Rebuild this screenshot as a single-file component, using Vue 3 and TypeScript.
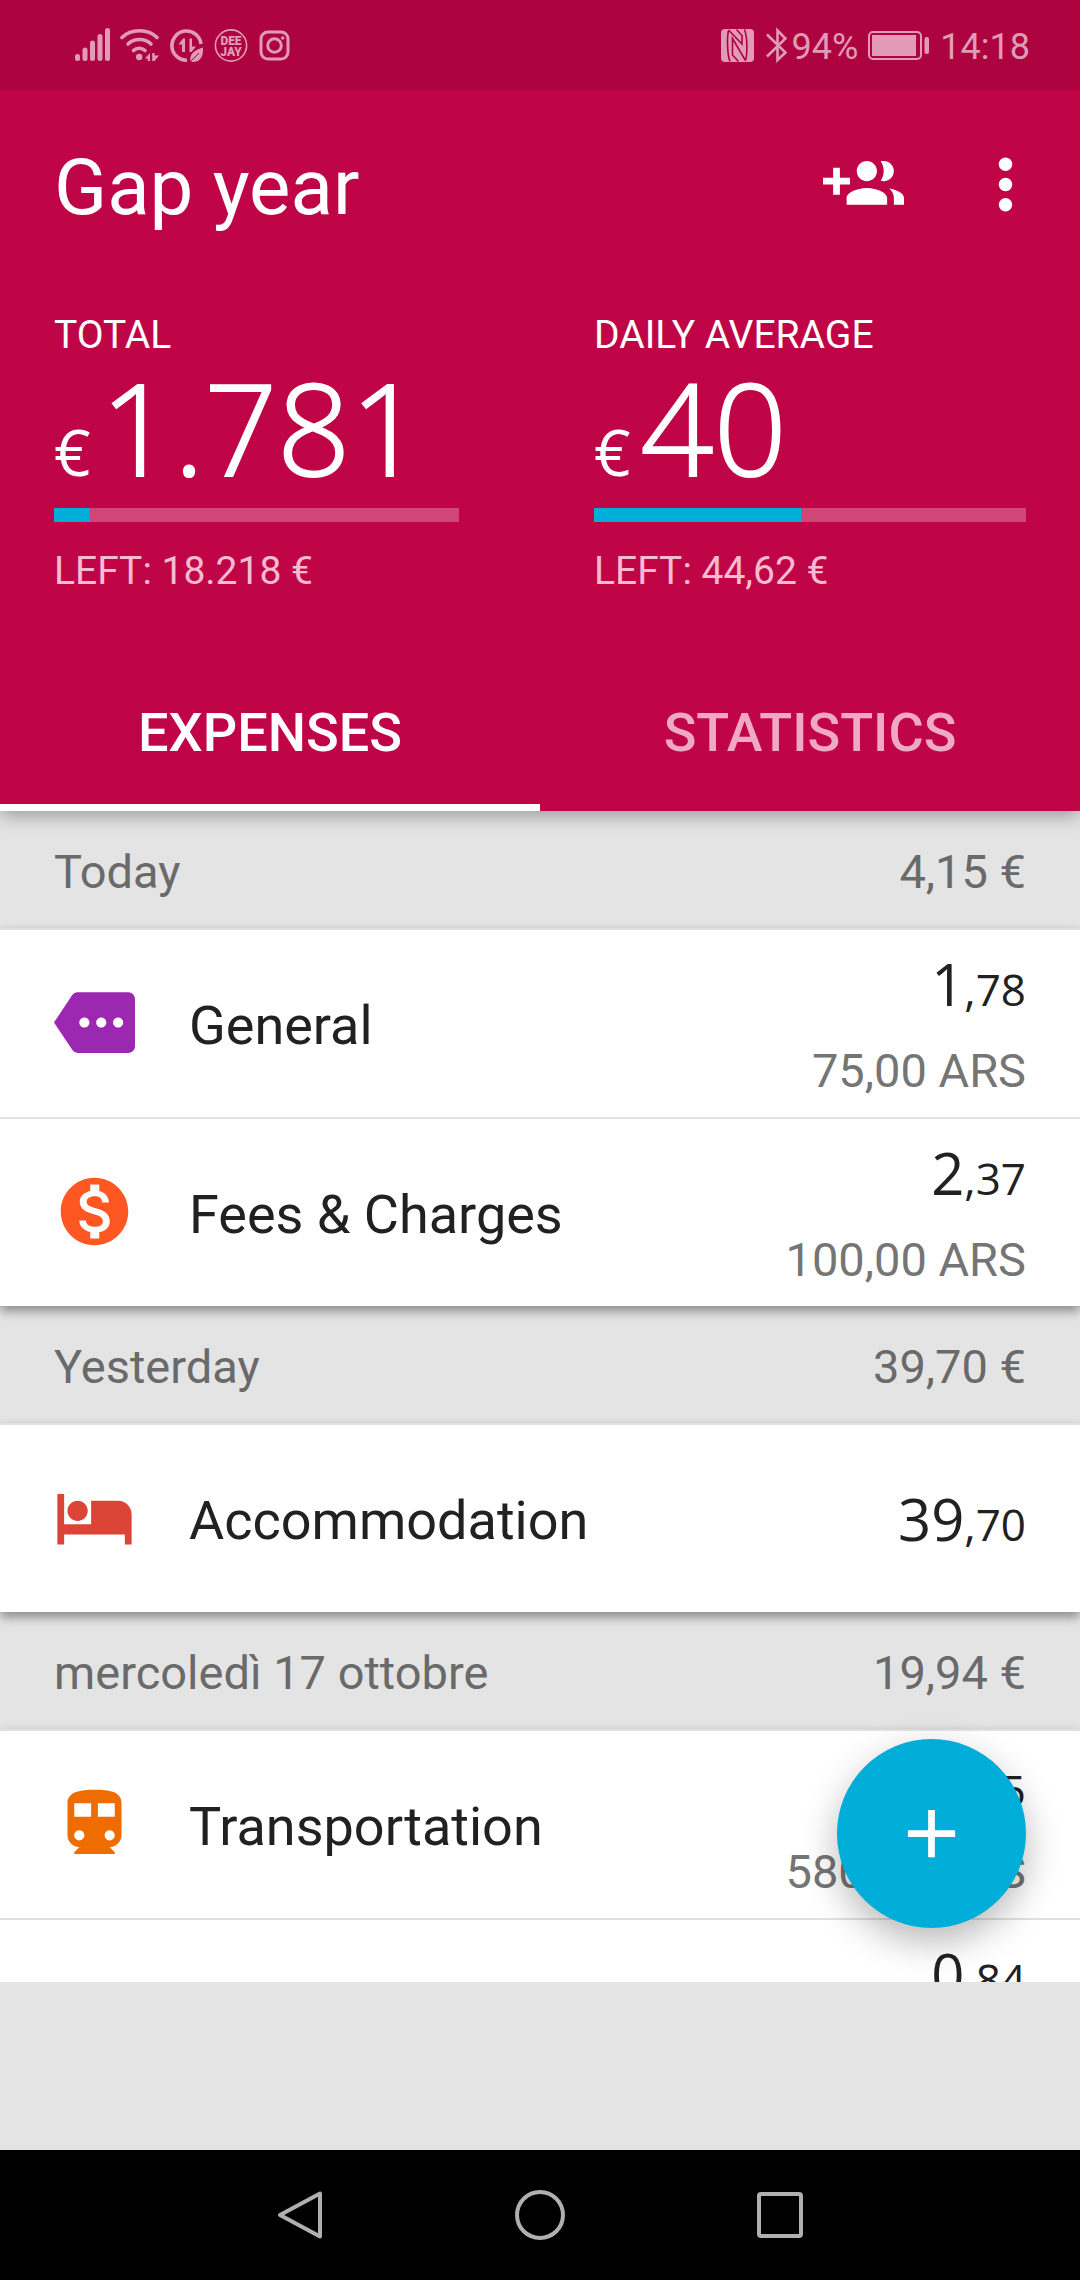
<script setup lang="ts">
import { ref } from 'vue'

interface Stat {
  label: string
  value: string
  left: string
  percent: number
}

interface Expense {
  icon?: string
  color?: string
  name?: string
  whole: string
  cents: string
  original?: string
}

interface Day {
  label: string
  total: string
  expenses: Expense[]
}

const icons: Record<string, string> = {
  tag: 'M22 3H7c-.69 0-1.23.35-1.59.88L0 12l5.41 8.11c.36.53.97.89 1.66.89H22c1.1 0 2-.9 2-2V5c0-1.1-.9-2-2-2zM9 13.5c-.83 0-1.5-.67-1.5-1.5s.67-1.5 1.5-1.5 1.5.67 1.5 1.5-.67 1.5-1.5 1.5zm5 0c-.83 0-1.5-.67-1.5-1.5s.67-1.5 1.5-1.5 1.5.67 1.5 1.5-.67 1.5-1.5 1.5zm5 0c-.83 0-1.5-.67-1.5-1.5s.67-1.5 1.5-1.5 1.5.67 1.5 1.5-.67 1.5-1.5 1.5z',
  coin: 'M12 2C6.48 2 2 6.48 2 12s4.48 10 10 10 10-4.48 10-10S17.52 2 12 2zm1.41 16.09V20h-2.67v-1.93c-1.71-.36-3.16-1.46-3.27-3.4h1.96c.1 1.05.82 1.87 2.65 1.87 1.96 0 2.4-.98 2.4-1.59 0-.83-.44-1.61-2.67-2.14-2.48-.6-4.18-1.62-4.18-3.67 0-1.72 1.39-2.84 3.11-3.21V4h2.67v1.95c1.86.45 2.79 1.86 2.85 3.39H14.3c-.05-1.11-.64-1.87-2.22-1.87-1.5 0-2.4.68-2.4 1.64 0 .84.65 1.39 2.67 1.91s4.18 1.39 4.18 3.91c-.01 1.83-1.38 2.83-3.12 3.16z',
  bed: 'M7 13c1.66 0 3-1.34 3-3S8.66 7 7 7s-3 1.34-3 3 1.34 3 3 3zm12-6h-8v7H3V5H1v15h2v-3h18v3h2v-9c0-2.21-1.79-4-4-4z',
  train: 'M12 2c-4 0-8 .5-8 4v9.5C4 17.43 5.57 19 7.5 19L6 20.5v.5h12v-.5L16.5 19c1.93 0 3.5-1.57 3.5-3.5V6c0-3.5-3.58-4-8-4zM7.5 17c-.83 0-1.5-.67-1.5-1.5S6.67 14 7.5 14s1.5.67 1.5 1.5S8.33 17 7.5 17zm3.5-7H6V6h5v4zm2 0V6h5v4h-5zm3.5 7c-.83 0-1.5-.67-1.5-1.5s.67-1.5 1.5-1.5 1.5.67 1.5 1.5-.67 1.5-1.5 1.5z',
}

const stats: Stat[] = [
  { label: 'TOTAL', value: '1.781', left: 'LEFT: 18.218 €', percent: 9 },
  { label: 'DAILY AVERAGE', value: '40', left: 'LEFT: 44,62 €', percent: 48 },
]

const tabs = ['EXPENSES', 'STATISTICS']
const activeTab = ref(0)

const days: Day[] = [
  {
    label: 'Today',
    total: '4,15 €',
    expenses: [
      { icon: 'tag', color: '#9c27b0', name: 'General', whole: '1', cents: ',78', original: '75,00 ARS' },
      { icon: 'coin', color: '#ff5722', name: 'Fees & Charges', whole: '2', cents: ',37', original: '100,00 ARS' },
    ],
  },
  {
    label: 'Yesterday',
    total: '39,70 €',
    expenses: [{ icon: 'bed', color: '#db4437', name: 'Accommodation', whole: '39', cents: ',70' }],
  },
  {
    label: 'mercoledì 17 ottobre',
    total: '19,94 €',
    expenses: [
      { icon: 'train', color: '#ef6c00', name: 'Transportation', whole: '13', cents: ',75', original: '580,00 ARS' },
      { whole: '0', cents: ',84', original: '' },
    ],
  },
]
</script>

<template>
  <div class="screen">
    <header class="top">
      <div class="status">
        <div class="status-group notices">
          <svg width="35" height="36" viewBox="0 0 35 36" fill="currentColor" aria-hidden="true">
            <rect x="0" y="27" width="5" height="7" rx="2.5" />
            <rect x="7.5" y="20.500" width="5" height="13.500" rx="2.5" />
            <rect x="15" y="13.500" width="5" height="20.500" rx="2.5" />
            <rect x="22.500" y="7" width="5" height="27" rx="2.5" />
            <rect x="30" y="1" width="5" height="33" rx="2.5" />
          </svg>
          <svg width="40" height="36" viewBox="0 0 40 36" aria-hidden="true">
            <g fill="none" stroke="currentColor" stroke-width="3.6" stroke-linecap="round">
              <path d="M2 10.500C11 1.500 28 1.500 37 10.500" />
              <path d="M8 17C14 11 25 11 31 17" />
              <path d="M13.500 23.500C16.500 20.500 22 20.500 25 23.500" />
            </g>
            <circle cx="19.200" cy="30" r="3.200" fill="currentColor" />
            <path d="M25 31.500L30 26v8h-2.200v-2.500zM39 28.500L34.500 34h-2.300v-8h2.300v2.500z" fill="currentColor" />
          </svg>
          <svg width="34" height="36" viewBox="0 0 34 36" aria-hidden="true">
            <path d="M17 33.200A14.600 14.600 0 1 1 31 17" fill="none" stroke="currentColor" stroke-width="3.6" />
            <path d="M8.500 17.500L13 11.500h2V25h-3v-7.500zM26 19.500L21.500 25h-2V11.500h2.500v8z" fill="currentColor" />
            <path d="M33 20.500c.5 8-2 14-9.500 14.500-1.500 0-2.500-.3-3-.8C19 26.500 25 23 33 20.500z" fill="currentColor" />
            <path d="M20 35L29 26" stroke="#ad0440" stroke-width="1" />
          </svg>
          <svg width="35" height="36" viewBox="0 0 35 36" aria-hidden="true">
            <circle cx="17" cy="18.500" r="15.600" fill="none" stroke="currentColor" stroke-width="1.600" />
            <g class="badge-text" fill="currentColor" text-anchor="middle">
              <text x="17" y="18">DEE</text>
              <text x="17" y="29">JAY</text>
            </g>
          </svg>
          <svg width="31" height="36" viewBox="0 0 31 36" fill="none" stroke="currentColor" stroke-width="3" aria-hidden="true">
            <rect x="2" y="5" width="27" height="27" rx="7" />
            <circle cx="15.500" cy="18.500" r="6.800" />
            <circle cx="23.700" cy="11" r="1.700" fill="currentColor" stroke="none" />
          </svg>
        </div>
        <div class="status-group system">
          <svg width="33" height="36" viewBox="0 0 33 36" aria-hidden="true">
            <rect x="0" y="2" width="33" height="33" rx="4" fill="currentColor" />
            <g fill="none" stroke="#ad0440" stroke-width="1.600">
              <path d="M7.500 3.500C6 10 6 27 9 34.500" />
              <path d="M7.500 3L21 17V8.500L15.500 2.500" />
              <path d="M17.500 34.500L11.500 28V11.500L24.500 33.500" />
              <path d="M23.500 2.500C26.500 10 26.500 27 24.500 33.500" />
            </g>
          </svg>
          <svg width="21" height="36" viewBox="0 0 21 36" fill="none" stroke="currentColor" stroke-width="2.600" aria-hidden="true">
            <path d="M1 7.500L19.500 25.500L11.500 33V3.500L19.500 11.500L1 29.500" />
          </svg>
          <span class="charge">94%</span>
          <svg width="61" height="36" viewBox="0 0 61 36" aria-hidden="true">
            <rect x="1" y="5" width="52" height="27" rx="4" fill="none" stroke="currentColor" stroke-width="2" />
            <rect x="4" y="8" width="44" height="21" fill="currentColor" />
            <rect x="56.500" y="10" width="4.500" height="17" rx="2" fill="currentColor" />
          </svg>
          <span class="clock">14:18</span>
        </div>
      </div>

      <div class="toolbar">
        <h1>Gap year</h1>
        <button class="icon-button" aria-label="Add people">
          <svg viewBox="0 0 24 24" fill="currentColor">
            <path d="M8 10H5V7H3v3H0v2h3v3h2v-3h3v-2zm10 1c1.660 0 2.990-1.340 2.990-3S19.660 5 18 5c-.32 0-.63.05-.91.14.57.81.9 1.790.9 2.860s-.34 2.040-.9 2.860c.28.09.59.14.91.14zm-5 0c1.660 0 2.990-1.340 2.990-3S14.660 5 13 5c-1.660 0-3 1.340-3 3s1.340 3 3 3zm6.620 2.160c.83.73 1.380 1.660 1.380 2.840v2h3v-2c0-1.540-2.370-2.490-4.380-2.840zM13 13c-2 0-6 1-6 3v2h12v-2c0-2-4-3-6-3z" />
          </svg>
        </button>
        <button class="icon-button" aria-label="More options">
          <svg viewBox="0 0 24 24" fill="currentColor">
            <circle cx="12" cy="6" r="2" />
            <circle cx="12" cy="12" r="2" />
            <circle cx="12" cy="18" r="2" />
          </svg>
        </button>
      </div>

      <div class="stats">
        <section v-for="stat in stats" :key="stat.label" class="stat">
          <h2>{{ stat.label }}</h2>
          <p class="value"><span class="currency">€</span>{{ stat.value }}</p>
          <div class="bar" role="progressbar" :aria-label="stat.label" :aria-valuenow="stat.percent">
            <div class="bar-fill" :style="{ width: stat.percent + '%' }"></div>
          </div>
          <p class="left">{{ stat.left }}</p>
        </section>
      </div>

      <nav class="tabs" role="tablist">
        <button
          v-for="(tab, i) in tabs"
          :key="tab"
          role="tab"
          class="tab"
          :class="{ active: i === activeTab }"
          :aria-selected="i === activeTab"
          @click="activeTab = i"
        >
          {{ tab }}
        </button>
      </nav>
    </header>

    <main class="content">
      <section v-for="day in days" :key="day.label">
        <div class="day">
          <h2>{{ day.label }}</h2>
          <span>{{ day.total }}</span>
        </div>
        <ul class="card">
          <li v-for="(item, i) in day.expenses" :key="i" class="row">
            <svg class="category" viewBox="0 0 24 24" :style="{ color: item.color }" fill="currentColor" aria-hidden="true">
              <path v-if="item.icon" :d="icons[item.icon]" />
            </svg>
            <span class="name">{{ item.name }}</span>
            <div class="amounts">
              <span class="amount">{{ item.whole }}<span class="cents">{{ item.cents }}</span></span>
              <span v-if="item.original !== undefined" class="original">{{ item.original }}</span>
            </div>
          </li>
        </ul>
      </section>
      <button class="fab" aria-label="Add expense">
        <svg viewBox="0 0 24 24" fill="currentColor"><path d="M19 13h-6v6h-2v-6H5v-2h6V5h2v6h6v2z" /></svg>
      </button>
    </main>

    <div class="banner"></div>

    <nav class="system-nav">
      <button aria-label="Back">
        <svg width="50" height="50" viewBox="0 0 50 50"><path d="M45 3.500V46.500L5 25z" /></svg>
      </button>
      <button aria-label="Home">
        <svg width="50" height="50" viewBox="0 0 50 50"><circle cx="25" cy="25" r="23" /></svg>
      </button>
      <button aria-label="Recent apps">
        <svg width="50" height="50" viewBox="0 0 50 50"><rect x="4" y="4" width="42" height="42" rx="2" /></svg>
      </button>
    </nav>
  </div>
</template>

<style>
body {
  margin: 0;
}
</style>

<style scoped>
.screen {
  display: flex;
  flex-direction: column;
  height: 100vh;
  background: #e4e4e4;
  font-family: Roboto, 'Liberation Sans', sans-serif;
  color: #212121;
}

h1,
h2,
p,
ul {
  margin: 0;
  padding: 0;
  font-weight: 400;
}

button {
  margin: 0;
  padding: 0;
  border: 0;
  background: none;
  color: inherit;
  font-family: inherit;
}

svg {
  display: block;
}

.top {
  position: relative;
  z-index: 1;
  flex: none;
  background: #bf0546;
  color: #fff;
  box-shadow: 0 4px 18px rgba(0, 0, 0, 0.35);
}

.status {
  display: flex;
  justify-content: space-between;
  align-items: center;
  height: 90px;
  padding: 0 50px 0 75px;
  background: #ad0440;
  color: #e29bb7;
  font-size: 36px;
  line-height: 44px;
}

.status-group {
  display: flex;
  align-items: center;
}

.notices {
  gap: 10px;
}

.charge {
  margin: 4px 10px 0 5px;
}

.clock {
  margin: 4px 0 0 11px;
}

.system svg + svg {
  margin-left: 12px;
}

.badge-text {
  font-family: Roboto, sans-serif;
  font-size: 12px;
  font-weight: 900;
}

.toolbar {
  display: flex;
  align-items: center;
  gap: 61px;
  height: 188px;
  padding: 0 34px 0 54px;
}

.toolbar h1 {
  flex: 1;
  padding-top: 8px;
  font-size: 78px;
  line-height: 96px;
}

.icon-button svg {
  width: 81px;
  height: 81px;
}

.stats {
  display: grid;
  grid-template-columns: 1fr 1fr;
  padding: 34px 0 60px;
}

.stat {
  padding: 0 54px;
}

.stat:first-child {
  padding-right: 81px;
}

.stat h2,
.left {
  font-size: 39px;
  line-height: 46px;
}

.value {
  font-family: 'Open Sans', 'Noto Sans', sans-serif;
  font-weight: 300;
  font-size: 128px;
  line-height: 138px;
  -webkit-text-stroke: 2px currentColor;
}

.currency {
  margin-right: 10px;
  font-weight: 400;
  font-size: 64px;
  line-height: 64px;
  -webkit-text-stroke: 0;
}

.bar {
  height: 14px;
  margin: 12px 0 26px;
  background: #d04676;
}

.bar-fill {
  height: 100%;
  background: #00add8;
}

.left {
  color: #f8bbd0;
}

.tabs {
  display: grid;
  grid-template-columns: 1fr 1fr;
}

.tab {
  height: 157px;
  border-top: 7px solid transparent;
  border-bottom: 7px solid transparent;
  color: #f0a9c4;
  font-size: 54px;
  font-weight: 500;
}

.tab.active {
  border-bottom-color: #fff;
  color: #fff;
}

.content {
  position: relative;
  flex: 1 1 0;
  min-height: 0;
  overflow: hidden;
}

.day {
  display: flex;
  justify-content: space-between;
  box-sizing: border-box;
  height: 117px;
  padding: 33px 54px 0;
  color: #6a6a6a;
  font-size: 47px;
  line-height: 56px;
}

.day h2 {
  font-size: inherit;
}

.card {
  list-style: none;
  background: #fff;
  box-shadow: 0 5px 10px rgba(0, 0, 0, 0.4);
}

.row {
  display: flex;
  align-items: center;
  gap: 54px;
  height: 187px;
  padding: 0 54px;
  border-top: 2px solid #e0e0e0;
}

.category {
  flex: none;
  width: 81px;
  height: 81px;
  margin-bottom: 2px;
}

.name {
  flex: 1;
  padding-top: 4px;
  font-size: 54px;
  line-height: 64px;
}

.amounts {
  display: flex;
  flex-direction: column;
  gap: 24px;
  text-align: right;
}

.amount {
  font-family: 'Open Sans', 'Noto Sans', sans-serif;
  font-size: 58px;
  line-height: 70px;
}

.cents {
  font-size: 44px;
  line-height: 44px;
}

.original {
  min-height: 56px;
  color: #757575;
  font-size: 47px;
  line-height: 56px;
}

.fab {
  position: absolute;
  right: 54px;
  bottom: 54px;
  display: grid;
  place-items: center;
  width: 189px;
  height: 189px;
  border-radius: 50%;
  background: #00add8;
  color: #fff;
  box-shadow: 0 14px 36px rgba(0, 0, 0, 0.28);
}

.fab svg {
  width: 81px;
  height: 81px;
}

.banner {
  flex: none;
  height: 168px;
}

.system-nav {
  display: flex;
  justify-content: center;
  flex: none;
  height: 130px;
  background: #000;
}

.system-nav button {
  display: grid;
  place-items: center;
  width: 240px;
}

.system-nav svg {
  fill: none;
  stroke: #b0b0b0;
  stroke-width: 4;
  stroke-linejoin: round;
}
</style>
